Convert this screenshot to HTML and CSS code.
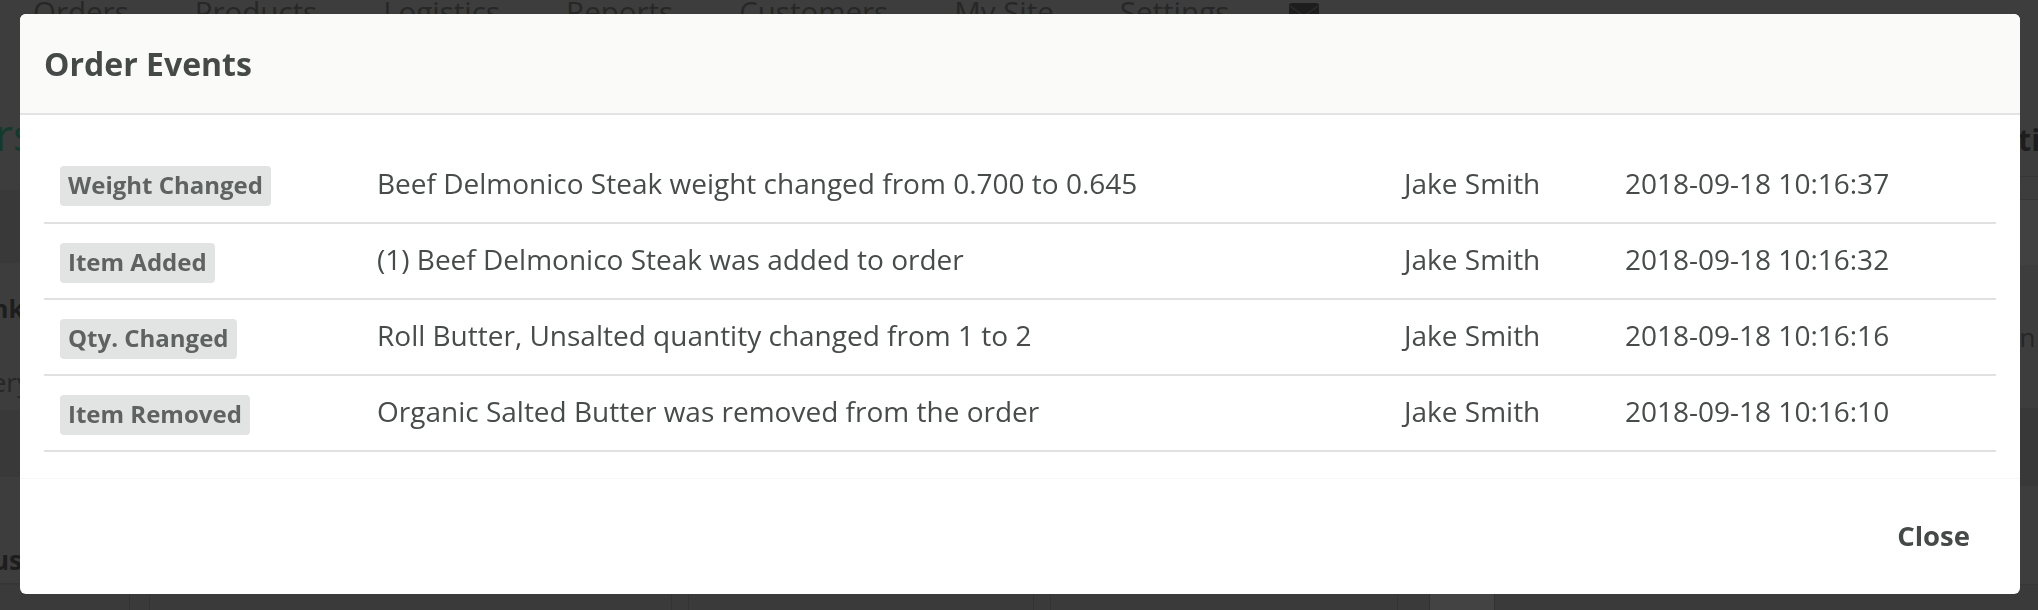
FILE: index.html
```html
<!DOCTYPE html>
<html lang="en">
<head>
<meta charset="utf-8">
<title>Order Events</title>
<link rel="stylesheet" href="styles.css">
</head>
<body>
<div class="page">
  <nav class="nav">
    <span class="nav-item">Orders</span>
    <span class="nav-item">Products</span>
    <span class="nav-item">Logistics</span>
    <span class="nav-item">Reports</span>
    <span class="nav-item">Customers</span>
    <span class="nav-item">My Site</span>
    <span class="nav-item">Settings</span>
    <svg class="nav-mail" width="30" height="24" viewBox="0 0 30 24" aria-hidden="true">
      <rect x="0" y="0" width="30" height="24" rx="3" fill="#1d1d1d"/>
      <path d="M1 3 L15 13 L29 3" fill="none" stroke="#2c2c2c" stroke-width="1.5"/>
    </svg>
  </nav>
  <div class="mid">
    <div class="lstrip">
      <div class="blk h18"></div>
      <div class="blk h72 clip-right top"><span class="bg-heading">Orders</span></div>
      <div class="blk h73 band"></div>
      <div class="blk h90 clip-right"><span class="bg-bold">Bank</span></div>
      <div class="blk h57 clip-right"><span class="bg-text">Delivery</span></div>
      <div class="blk h67 band"></div>
      <div class="blk h107 clip-right bottom"><span class="bg-bold2">Status</span></div>
    </div>
    <div class="center"></div>
    <div class="rstrip">
      <div class="blk h18"></div>
      <div class="blk h59 line-b top"><span class="bg-bold-r">Action</span></div>
      <div class="blk h23 line-b"></div>
      <div class="blk h65 band2"></div>
      <div class="blk h143"><span class="bg-text-r">Jason</span></div>
      <div class="blk h78 band3"></div>
      <div class="blk h98"></div>
    </div>
  </div>
  <div class="foot-row">
    <div class="cell w130"></div>
    <div class="cell w20"></div>
    <div class="cell w522"></div>
    <div class="cell w17"></div>
    <div class="cell w345"></div>
    <div class="cell w17"></div>
    <div class="cell w347"></div>
    <div class="cell w32"></div>
    <div class="cell w65 light"></div>
    <div class="cell grow"></div>
  </div>
</div>

<div class="backdrop">
  <div class="modal">
    <div class="modal-header">
      <h4 class="modal-title">Order Events</h4>
    </div>
    <div class="modal-body">
      <table class="events">
        <colgroup>
          <col class="c-type">
          <col class="c-desc">
          <col class="c-user">
          <col class="c-date">
        </colgroup>
        <tbody>
          <tr>
            <td><span class="badge">Weight Changed</span></td>
            <td>Beef Delmonico Steak weight changed from 0.700 to 0.645</td>
            <td>Jake Smith</td>
            <td>2018-09-18 10:16:37</td>
          </tr>
          <tr>
            <td><span class="badge">Item Added</span></td>
            <td>(1) Beef Delmonico Steak was added to order</td>
            <td>Jake Smith</td>
            <td>2018-09-18 10:16:32</td>
          </tr>
          <tr>
            <td><span class="badge">Qty. Changed</span></td>
            <td>Roll Butter, Unsalted quantity changed from 1 to 2</td>
            <td>Jake Smith</td>
            <td>2018-09-18 10:16:16</td>
          </tr>
          <tr>
            <td><span class="badge">Item Removed</span></td>
            <td>Organic Salted Butter was removed from the order</td>
            <td>Jake Smith</td>
            <td>2018-09-18 10:16:10</td>
          </tr>
        </tbody>
      </table>
    </div>
    <div class="modal-footer">
      <button class="btn-close" type="button">Close</button>
    </div>
  </div>
</div>
</body>
</html>
```

FILE: styles.css
```css
* { box-sizing: border-box; }

html, body {
  margin: 0;
  padding: 0;
}

body {
  width: 2038px;
  height: 610px;
  overflow: hidden;
  background: #3d3d3d;
  font-family: "Open Sans", "Noto Sans", "Liberation Sans", sans-serif;
  color: #474c4b;
}

/* ---------- dimmed page behind the modal ---------- */
.page {
  display: flex;
  flex-direction: column;
  height: 610px;
}

.nav {
  display: flex;
  align-items: flex-start;
  height: 100px;
  padding-left: 33px;
}

.nav-item {
  font-size: 29.5px;
  line-height: 40px;
  margin-top: -8px;
  color: #272727;
  white-space: nowrap;
}

.nav-item + .nav-item { margin-left: 66px; }

.nav-mail {
  margin-left: 60px;
  margin-top: 3px;
}

.mid {
  display: flex;
  height: 484px;
}

.lstrip {
  width: 20px;
  display: flex;
  flex-direction: column;
  overflow: hidden;
}

.rstrip {
  width: 18px;
  display: flex;
  flex-direction: column;
  overflow: hidden;
}

.center { flex: 1; }

.blk { flex: none; display: flex; align-items: center; }
.h18 { height: 18px; }
.h23 { height: 23px; }
.h57 { height: 57px; }
.h59 { height: 59px; }
.h65 { height: 65px; }
.h67 { height: 67px; }
.h72 { height: 72px; }
.h73 { height: 73px; }
.h78 { height: 78px; }
.h90 { height: 90px; }
.h98 { height: 98px; }
.h107 { height: 107px; }
.h143 { height: 143px; }

.clip-right { justify-content: flex-end; }
.top { align-items: flex-start; }

.bottom {
  align-items: flex-end;
  padding-bottom: 8px;
  border-bottom: 1px solid #353535;
}

.band { background: #393939; }
.band2 { background: #414141; }
.band3 { background: #383838; }
.line-b { border-bottom: 1px solid #363636; }

.bg-heading {
  font-size: 44px;
  line-height: 44px;
  color: #143a2c;
  white-space: nowrap;
  margin-top: -6px;
  margin-right: -14px;
}

.bg-bold {
  font-size: 25px;
  font-weight: 700;
  color: #1d1d1d;
  white-space: nowrap;
  margin-right: -4px;
}

.bg-bold2 {
  font-size: 26px;
  line-height: 30px;
  font-weight: 700;
  color: #1d1d1d;
  white-space: nowrap;
  margin-right: -2px;
}

.bg-text {
  font-size: 26px;
  color: #262626;
  white-space: nowrap;
  margin-right: -10px;
}

.bg-bold-r {
  font-size: 30px;
  line-height: 40px;
  font-weight: 700;
  color: #1d1d1d;
  white-space: nowrap;
  margin-left: -38px;
  margin-top: 2px;
}

.bg-text-r {
  font-size: 26px;
  color: #262626;
  white-space: nowrap;
  margin-left: -50px;
}

.foot-row {
  display: flex;
  height: 26px;
  border-top: 1px solid #363636;
  background: #3a3a3a;
}

.cell { flex: none; border-right: 1px solid #333333; }
.w130 { width: 130px; }
.w20 { width: 20px; }
.w522 { width: 522px; }
.w17 { width: 17px; }
.w345 { width: 345px; }
.w347 { width: 347px; }
.w32 { width: 32px; }
.w65 { width: 65px; }
.light { background: #434343; }
.grow { flex: 1; border-right: none; }

/* ---------- modal ---------- */
.backdrop {
  position: fixed;
  inset: 0;
  padding: 14px 18px 0 20px;
}

.modal {
  background: #ffffff;
  border-radius: 6px;
  overflow: hidden;
}

.modal-header {
  background: #fafbf9;
  padding: 28px 24px 27px 24px;
  border-bottom: 2px solid #e2e4e3;
}

.modal-title {
  margin: 0;
  font-size: 32px;
  line-height: 44px;
  font-weight: 700;
  color: #454a49;
}

.modal-body {
  padding: 32px 24px 26px 24px;
}

.events {
  width: 100%;
  border-collapse: collapse;
  table-layout: fixed;
}

.c-type { width: 317px; }
.c-desc { width: 1027px; }
.c-user { width: 221px; }
.c-date { width: auto; }

.events td {
  height: 76px;
  padding: 0 16px;
  border-bottom: 2px solid #e1e1e1;
  vertical-align: middle;
  font-size: 28px;
  line-height: 40px;
  font-weight: 500;
  color: #474c4b;
  white-space: nowrap;
}

.events td + td { padding-bottom: 4px; }

.badge {
  display: inline-block;
  padding: 3px 8px 5px 8px;
  line-height: 32px;
  font-size: 24px;
  font-weight: 700;
  color: #5e6362;
  background: #e2e4e3;
  border-radius: 4px;
}

.modal-footer {
  display: flex;
  justify-content: flex-end;
  border-top: 1px solid #f6f7f6;
  padding: 39px 24px 40px 24px;
}

.btn-close {
  font-family: inherit;
  font-size: 27.5px;
  line-height: 36px;
  font-weight: 700;
  color: #454a49;
  background: none;
  border: none;
  padding: 0 26px 0 12px;
  margin: 0;
}
```
